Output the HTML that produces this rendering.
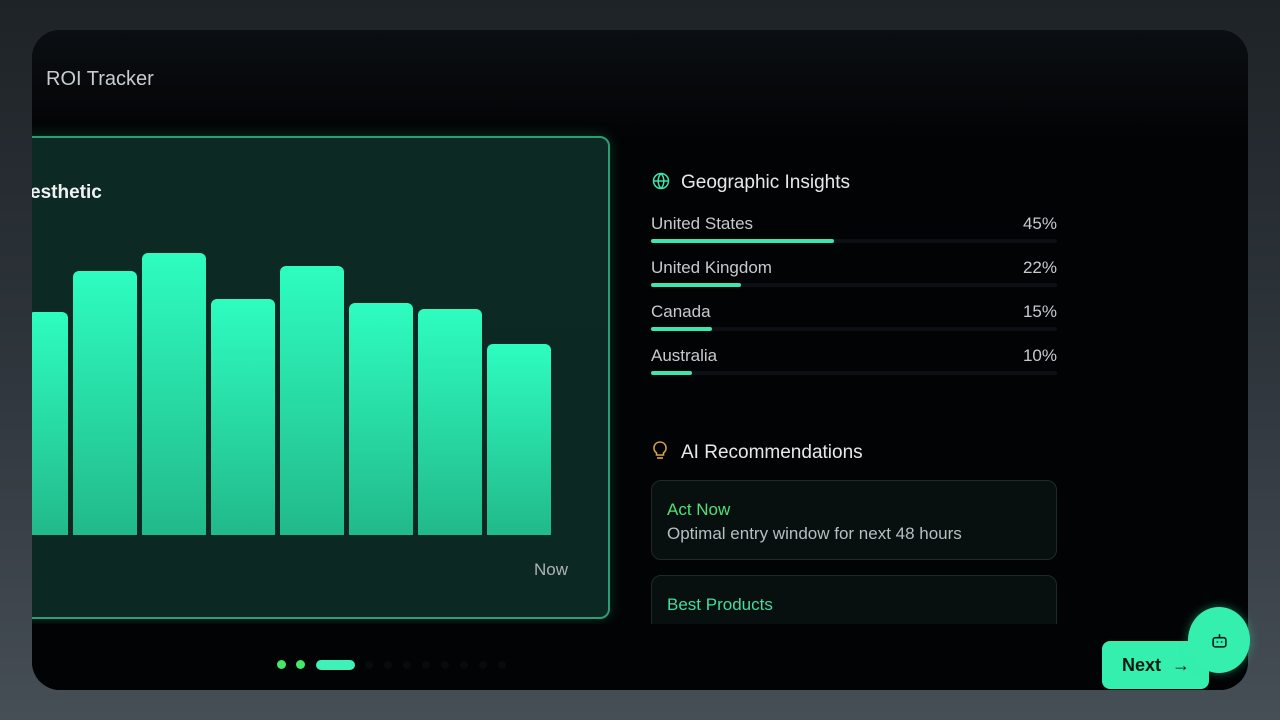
<!DOCTYPE html>
<html><head><meta charset="utf-8"><style>
*{margin:0;padding:0;box-sizing:border-box}
body{width:1280px;height:720px;overflow:hidden;background:linear-gradient(180deg,#1e2327 0%,#2e353b 50%,#464e56 100%);font-family:"Liberation Sans",sans-serif;position:relative}
.card{position:absolute;left:32px;top:30px;width:1216px;height:660px;border-radius:28px;background:#020304;overflow:hidden}
.t{position:absolute;color:#e6e8ea}
.panel{position:absolute;left:-20px;top:106px;width:598px;height:483px;border:2px solid #2c9e74;border-radius:10px;background:linear-gradient(180deg,#0c2924,#0b2822);box-shadow:0 0 14px rgba(40,200,140,.25)}
.bar{position:absolute;bottom:82px;width:64px;border-radius:6px 6px 0 0;background:linear-gradient(180deg,#2efdc0,#22b98a)}
.row{position:absolute;left:619px;width:406px;font-size:17px;color:#c7cacd}
.row span{position:absolute;right:0;top:0}
.track{position:absolute;left:0;top:26px;width:406px;height:4px;border-radius:2px;background:#0c0f14}
.fill{height:4px;border-radius:2px;background:#3ce6ad}
.rec{position:absolute;left:619px;width:406px;border:1px solid #1d2a27;border-radius:10px;background:#07100e}
.dot{position:absolute;top:630px;width:9px;height:9px;border-radius:50%;background:#46e86a}
.dd{position:absolute;top:631px;width:8px;height:8px;border-radius:50%;background:#080b0c}
</style></head><body>
<div class="card">
  <div style="position:absolute;left:0;top:0;width:1216px;height:110px;background:linear-gradient(180deg,#0b0f13,#020304)"></div>
  <div class="t" style="left:14px;top:38px;font-size:20px;color:#c9cccf">ROI Tracker</div>
  <div class="panel">
    <div class="t" style="left:16px;top:44px;font-size:19px;font-weight:bold;color:#f0f2f2">esthetic</div>
    <div class="bar" style="left:14px;width:40px;height:223px"></div>
    <div class="bar" style="left:59px;height:264px"></div>
    <div class="bar" style="left:128px;height:282px"></div>
    <div class="bar" style="left:197px;height:236px"></div>
    <div class="bar" style="left:266px;height:269px"></div>
    <div class="bar" style="left:335px;height:232px"></div>
    <div class="bar" style="left:404px;height:226px"></div>
    <div class="bar" style="left:473px;height:191px"></div>
    <div class="t" style="left:520px;top:422px;font-size:17px;color:#aeb4b3">Now</div>
  </div>
  <svg style="position:absolute;left:620px;top:142px" width="18" height="18" viewBox="0 0 24 24" fill="none" stroke="#3ce6ad" stroke-width="2"><circle cx="12" cy="12" r="10"/><path d="M2 12h20M12 2a15 15 0 0 1 0 20M12 2a15 15 0 0 0 0 20"/></svg>
  <div class="t" style="left:649px;top:142px;font-size:19px">Geographic Insights</div>
  <div class="row" style="top:184px">United States<span>45%</span><div class="track" style="top:25px"><div class="fill" style="width:183px"></div></div></div>
  <div class="row" style="top:228px">United Kingdom<span>22%</span><div class="track" style="top:25px"><div class="fill" style="width:90px"></div></div></div>
  <div class="row" style="top:272px">Canada<span>15%</span><div class="track" style="top:25px"><div class="fill" style="width:61px"></div></div></div>
  <div class="row" style="top:316px">Australia<span>10%</span><div class="track" style="top:25px"><div class="fill" style="width:41px"></div></div></div>
  <svg style="position:absolute;left:620px;top:411px" width="16" height="20" viewBox="0 0 16 20" fill="none" stroke="#d9a24a" stroke-width="1.6"><path d="M8 1a6 6 0 0 0-3.5 10.9V14h7v-2.1A6 6 0 0 0 8 1z"/><path d="M5 17h6"/></svg>
  <div class="t" style="left:649px;top:412px;font-size:19px">AI Recommendations</div>
  <div class="rec" style="top:450px;height:80px">
    <div class="t" style="left:15px;top:19px;font-size:17px;color:#4fe07a">Act Now</div>
    <div class="t" style="left:15px;top:43px;font-size:17px;color:#b9bec0">Optimal entry window for next 48 hours</div>
  </div>
  <div class="rec" style="top:545px;height:80px">
    <div class="t" style="left:15px;top:19px;font-size:17px;color:#45dca0">Best Products</div>
  </div>
  <div style="position:absolute;left:0;top:594px;width:1216px;height:66px;background:#020304"></div>
  <div class="dot" style="left:245px"></div><div class="dot" style="left:264px"></div>
  <div style="position:absolute;left:284px;top:630px;width:39px;height:10px;border-radius:5px;background:#3ef2b5"></div>
  <div class="dd" style="left:333px"></div><div class="dd" style="left:352px"></div><div class="dd" style="left:371px"></div><div class="dd" style="left:390px"></div><div class="dd" style="left:409px"></div><div class="dd" style="left:428px"></div><div class="dd" style="left:447px"></div><div class="dd" style="left:466px"></div>
</div>
<div style="position:absolute;left:1102px;top:641px;width:107px;height:48px;border-radius:8px;background:#34efad;color:#0a1a14;font-size:18px;font-weight:bold;padding:14px 0 0 20px">Next <span style="margin-left:6px">→</span></div>
<div style="position:absolute;left:1188px;top:607px;width:62px;height:66px;border-radius:50%;background:#34efad;box-shadow:0 0 10px rgba(52,239,173,.4)">
<svg style="position:absolute;left:23px;top:25px" width="17" height="17" viewBox="0 0 24 24" fill="none" stroke="#0a1a14" stroke-width="2.2"><rect x="3" y="8" width="18" height="13" rx="3"/><path d="M12 3v5M9 13v2M15 13v2"/></svg>
</div>
</body></html>
